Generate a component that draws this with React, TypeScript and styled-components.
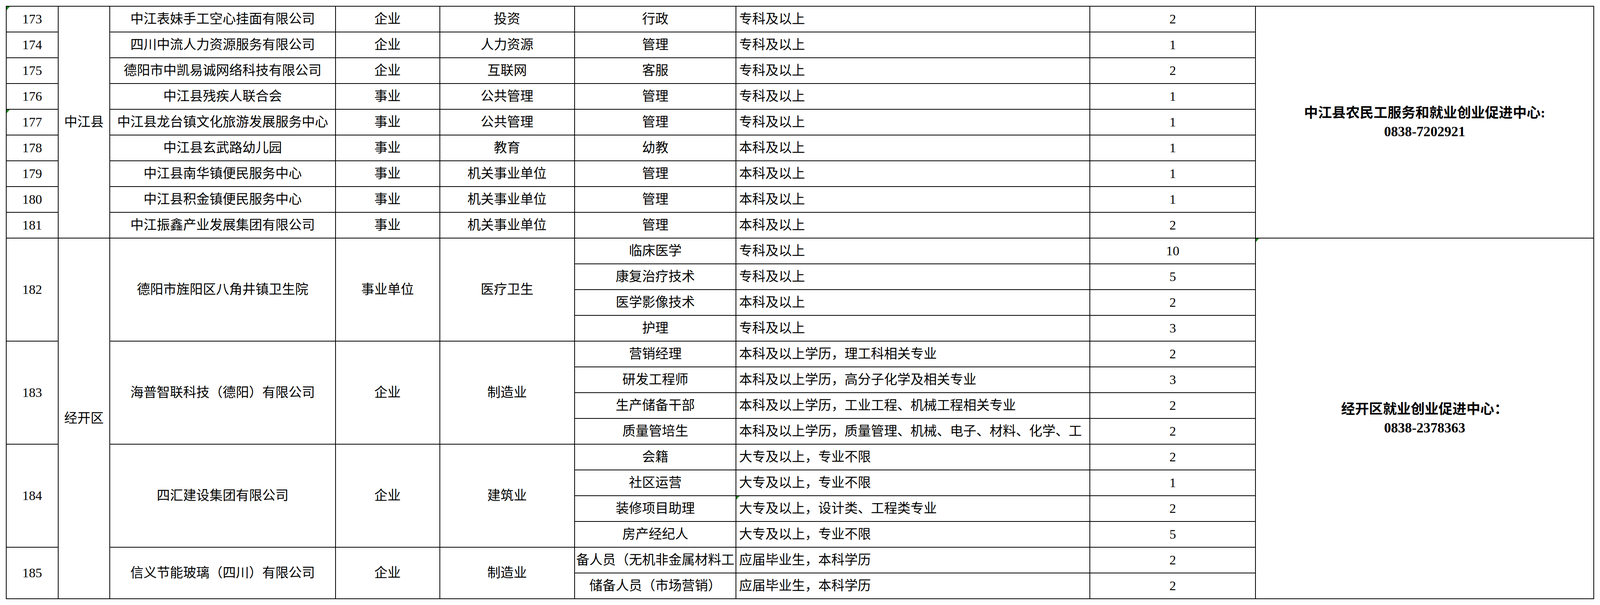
import styled, { createGlobalStyle } from 'styled-components';

const GlobalStyle = createGlobalStyle`
  html, body {
    margin: 0;
    padding: 0;
    background: #fff;
    overflow: hidden;
  }
`;

const Page = styled.div`
  padding: 15px 15px 0 15px;
`;

// Sheet grid: the black background shows through the 2px gaps as cell borders.
// Columns are fractions so the sheet always spans the window width.
const Sheet = styled.div`
  display: grid;
  grid-template-columns: 144fr 144fr 634fr 292fr 378fr 454fr 996fr 465fr 952fr;
  grid-auto-rows: 64px;
  gap: 2px;
  padding: 2px;
  background: #000;
  font-family: 'Liberation Serif', 'Noto Sans CJK SC', serif;
  font-size: 0.824vw;
  color: #000;
`;

const Cell = styled.div<{ $rows?: number; $left?: boolean; $flag?: boolean }>`
  position: relative;
  min-width: 0;
  grid-row: span ${({ $rows }) => $rows ?? 1};
  display: flex;
  align-items: center;
  justify-content: ${({ $left }) => ($left ? 'flex-start' : 'center')};
  padding-left: ${({ $left }) => ($left ? '0.16vw' : '0')};
  background: #fff;
  white-space: nowrap;
  overflow: hidden;
  line-height: 1.2;

  &::before {
    content: '';
    display: ${({ $flag }) => ($flag ? 'block' : 'none')};
    position: absolute;
    top: 0;
    left: 0;
    border-top: 9px solid #1d8a1d;
    border-right: 8px solid transparent;
  }
`;

const ContactCell = styled(Cell)`
  flex-direction: column;
  font-size: 0.87vw;
  font-weight: bold;
  line-height: 48px;
`;

const ContactLine = styled.div``;

type Job = { title: string; req: string; count: number; flag?: boolean };
type Employer = {
  no: number;
  name: string;
  kind: string;
  industry: string;
  jobs: Job[];
  flag?: boolean;
};
type District = {
  name: string;
  contact: string[];
  contactFlag?: boolean;
  employers: Employer[];
};

const one = (title: string, req: string, count: number): Job[] => [{ title, req, count }];

const DISTRICTS: District[] = [
  {
    name: '中江县',
    contact: ['中江县农民工服务和就业创业促进中心:', '0838-7202921'],
    employers: [
      { no: 173, name: '中江表妹手工空心挂面有限公司', kind: '企业', industry: '投资', jobs: one('行政', '专科及以上', 2), flag: true },
      { no: 174, name: '四川中流人力资源服务有限公司', kind: '企业', industry: '人力资源', jobs: one('管理', '专科及以上', 1) },
      { no: 175, name: '德阳市中凯易诚网络科技有限公司', kind: '企业', industry: '互联网', jobs: one('客服', '专科及以上', 2) },
      { no: 176, name: '中江县残疾人联合会', kind: '事业', industry: '公共管理', jobs: one('管理', '专科及以上', 1) },
      { no: 177, name: '中江县龙台镇文化旅游发展服务中心', kind: '事业', industry: '公共管理', jobs: one('管理', '专科及以上', 1), flag: true },
      { no: 178, name: '中江县玄武路幼儿园', kind: '事业', industry: '教育', jobs: one('幼教', '本科及以上', 1) },
      { no: 179, name: '中江县南华镇便民服务中心', kind: '事业', industry: '机关事业单位', jobs: one('管理', '本科及以上', 1) },
      { no: 180, name: '中江县积金镇便民服务中心', kind: '事业', industry: '机关事业单位', jobs: one('管理', '本科及以上', 1) },
      { no: 181, name: '中江振鑫产业发展集团有限公司', kind: '事业', industry: '机关事业单位', jobs: one('管理', '本科及以上', 2) },
    ],
  },
  {
    name: '经开区',
    contact: ['经开区就业创业促进中心：', '0838-2378363'],
    contactFlag: true,
    employers: [
      {
        no: 182,
        name: '德阳市旌阳区八角井镇卫生院',
        kind: '事业单位',
        industry: '医疗卫生',
        jobs: [
          { title: '临床医学', req: '专科及以上', count: 10 },
          { title: '康复治疗技术', req: '专科及以上', count: 5 },
          { title: '医学影像技术', req: '本科及以上', count: 2 },
          { title: '护理', req: '专科及以上', count: 3 },
        ],
      },
      {
        no: 183,
        name: '海普智联科技（德阳）有限公司',
        kind: '企业',
        industry: '制造业',
        jobs: [
          { title: '营销经理', req: '本科及以上学历，理工科相关专业', count: 2 },
          { title: '研发工程师', req: '本科及以上学历，高分子化学及相关专业', count: 3 },
          { title: '生产储备干部', req: '本科及以上学历，工业工程、机械工程相关专业', count: 2 },
          { title: '质量管培生', req: '本科及以上学历，质量管理、机械、电子、材料、化学、工', count: 2 },
        ],
      },
      {
        no: 184,
        name: '四汇建设集团有限公司',
        kind: '企业',
        industry: '建筑业',
        jobs: [
          { title: '会籍', req: '大专及以上，专业不限', count: 2 },
          { title: '社区运营', req: '大专及以上，专业不限', count: 1 },
          { title: '装修项目助理', req: '大专及以上，设计类、工程类专业', count: 2, flag: true },
          { title: '房产经纪人', req: '大专及以上，专业不限', count: 5 },
        ],
      },
      {
        no: 185,
        name: '信义节能玻璃（四川）有限公司',
        kind: '企业',
        industry: '制造业',
        jobs: [
          { title: '备人员（无机非金属材料工', req: '应届毕业生，本科学历', count: 2 },
          { title: '储备人员（市场营销）', req: '应届毕业生，本科学历', count: 2 },
        ],
      },
    ],
  },
];

export default function App() {
  return (
    <Page>
      <GlobalStyle />
      <Sheet>
        {DISTRICTS.map((d) => {
          const total = d.employers.reduce((n, e) => n + e.jobs.length, 0);
          return d.employers.map((e, ei) =>
            e.jobs.map((job, ji) => {
              const first = ji === 0;
              const districtFirst = first && ei === 0;
              const span = e.jobs.length;
              return [
                first && (
                  <Cell key={`${e.no}-no`} $rows={span} $flag={e.flag}>
                    {e.no}
                  </Cell>
                ),
                districtFirst && (
                  <Cell key={`${d.name}-name`} $rows={total}>
                    {d.name}
                  </Cell>
                ),
                first && (
                  <Cell key={`${e.no}-org`} $rows={span}>
                    {e.name}
                  </Cell>
                ),
                first && (
                  <Cell key={`${e.no}-kind`} $rows={span}>
                    {e.kind}
                  </Cell>
                ),
                first && (
                  <Cell key={`${e.no}-ind`} $rows={span}>
                    {e.industry}
                  </Cell>
                ),
                <Cell key={`${e.no}-${ji}-title`}>{job.title}</Cell>,
                <Cell key={`${e.no}-${ji}-req`} $left $flag={job.flag}>
                  {job.req}
                </Cell>,
                <Cell key={`${e.no}-${ji}-count`}>{job.count}</Cell>,
                districtFirst && (
                  <ContactCell key={`${d.name}-contact`} $rows={total} $flag={d.contactFlag}>
                    {d.contact.map((line) => (
                      <ContactLine key={line}>{line}</ContactLine>
                    ))}
                  </ContactCell>
                ),
              ];
            })
          );
        })}
      </Sheet>
    </Page>
  );
}
